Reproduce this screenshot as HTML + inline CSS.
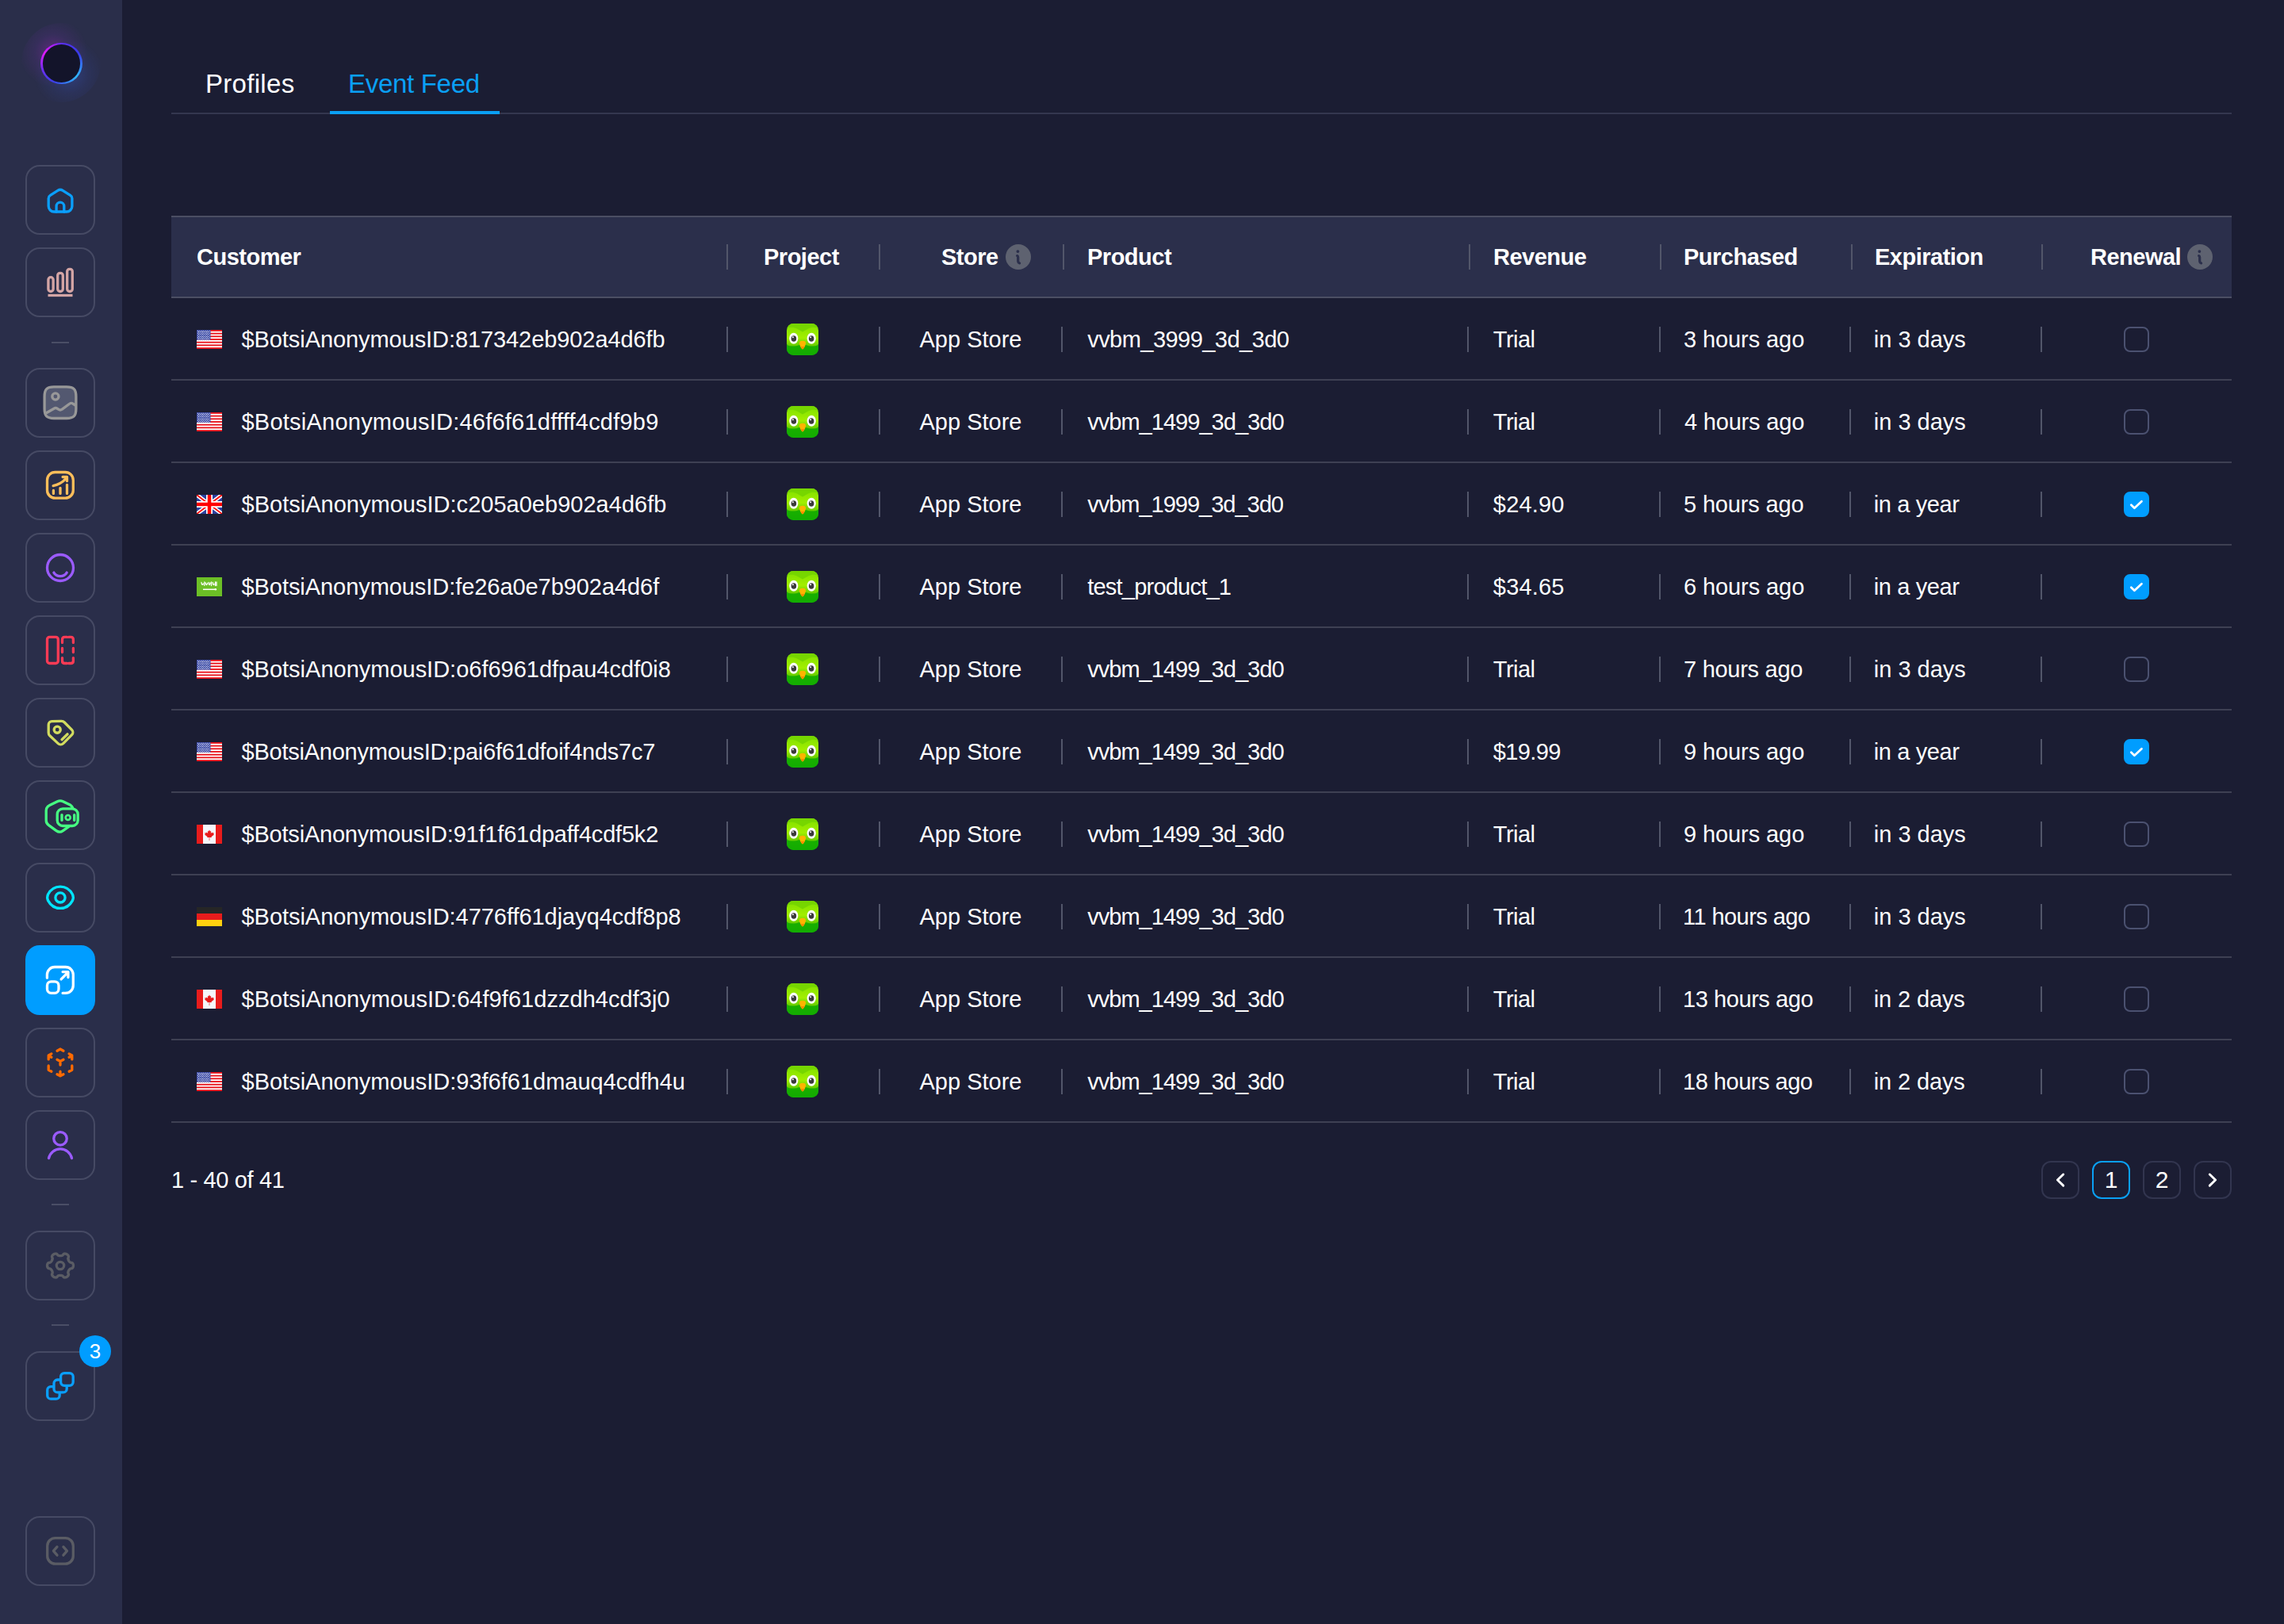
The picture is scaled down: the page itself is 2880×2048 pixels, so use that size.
<!DOCTYPE html>
<html><head><meta charset="utf-8"><style>
*{box-sizing:border-box;margin:0;padding:0}
html,body{width:2880px;height:2048px;overflow:hidden;background:#1b1d33;font-family:"Liberation Sans",sans-serif;color:#fff;-webkit-font-smoothing:antialiased}
.t,.h,.tab,.pg,.badge{opacity:0.999}
.abs{position:absolute}
#side{position:absolute;left:0;top:0;width:154px;height:2048px;background:#2a2e4a}
.sbtn{position:absolute;left:32px;width:88px;height:88px;border:2px solid #464a64;border-radius:18px}
.sbtn svg{position:absolute;left:-2px;top:-2px}
.sbtn.act{background:#009dff;border-color:#009dff}
.dash{position:absolute;left:65px;width:22px;height:2px;background:#4a4e66}
.badge{position:absolute;left:100px;top:1684px;width:40px;height:40px;border-radius:50%;background:#009dff;color:#fff;font-size:26px;line-height:40px;text-align:center}
.tab{position:absolute;top:86px;font-size:33px;line-height:40px;white-space:nowrap}
.t{position:absolute;font-size:29px;line-height:32px;white-space:nowrap;color:#fff}
.h{position:absolute;font-size:29px;line-height:32px;white-space:nowrap;color:#fff;font-weight:700;letter-spacing:-0.5px}
.vs{position:absolute;width:2px;height:32px;background:#52566a}
.hl{position:absolute;left:216px;width:2598px;height:2px;background:#3e4053}
.info{position:absolute;width:32px;height:32px;border-radius:50%;background:#5e6270}
.cb{position:absolute;width:32px;height:32px;border:2px solid #4b5170;border-radius:8px}
.cb.on{background:#009dff;border-color:#009dff}
.cb.on svg{position:absolute;left:-2px;top:-2px}
.pg{position:absolute;top:1464px;width:48px;height:48px;border:2px solid #32354f;border-radius:12px;font-size:30px;line-height:44px;text-align:center;color:#fff}
.pg.on{border-color:#0aa0f5}
.pg svg{position:absolute;left:-2px;top:-2px}
</style></head><body>
<div id="side">
<div class="abs" style="left:27px;top:29px;width:100px;height:100px;border-radius:50%;background:radial-gradient(circle at 40% 37%, rgba(205,40,235,0.30) 0%, rgba(150,50,220,0.12) 26%, rgba(60,70,200,0) 50%),radial-gradient(circle at 60% 64%, rgba(60,100,245,0.30) 0%, rgba(60,90,230,0.10) 28%, rgba(60,90,230,0) 50%)"></div>
<div class="abs" style="left:51px;top:53.5px;width:52.5px;height:52.5px;border-radius:50%;background:conic-gradient(from 0deg,#5a30f0 0deg,#3a3ae8 60deg,#2fb8ff 130deg,#3a40e8 200deg,#6a2ff0 250deg,#e01cff 300deg,#a020f8 340deg,#5a30f0 360deg)"></div>
<div class="abs" style="left:53.5px;top:56px;width:47.5px;height:47.5px;border-radius:50%;background:#13142a"></div>

<div class="sbtn" style="top:208px"><svg width="88" height="88" viewBox="0 0 88 88" fill="none" stroke="#0a9ffc" stroke-width="3.3" stroke-linecap="round" stroke-linejoin="round"><path d="M29.2 42.2C29.2 40.6 30 39.2 31.3 38.4L40.7 32.3C42.7 31 45.3 31 47.3 32.3L56.8 38.4C58.1 39.2 58.9 40.6 58.9 42.2V52C58.9 55.9 55.8 59 51.9 59H36.2C32.3 59 29.2 55.9 29.2 52Z"/><path d="M39.1 59V52A4.85 4.85 0 0 1 48.8 52V59"/></svg></div>
<div class="sbtn" style="top:312px"><svg width="88" height="88" viewBox="0 0 88 88" fill="none" stroke="#d4a5a5" stroke-width="3.3" stroke-linecap="round" stroke-linejoin="round"><rect x="28.9" y="37.7" width="6.2" height="17.8" rx="3"/><rect x="40.7" y="32.4" width="6.6" height="23.1" rx="3"/><rect x="52.7" y="27.3" width="6.6" height="28.2" rx="3"/><path d="M28.5 60.5H59.5" stroke-linecap="butt"/></svg></div>
<div class="sbtn" style="top:464px"><svg width="88" height="88" viewBox="0 0 88 88" fill="none" stroke="#989898" stroke-width="3.3" stroke-linecap="round" stroke-linejoin="round"><path fill="#535870" d="M24.1 36C24.1 27 27 23.8 36 23.8H52C61 23.8 63.9 27 63.9 36V51.5C63.9 60.5 61 63.5 52 63.5H36C27 63.5 24.1 60.5 24.1 51.5Z"/><circle cx="37.9" cy="36" r="4.1"/><path d="M26 57L36.5 51C37.5 50.4 38.8 50.4 39.8 51L42.5 52.6C43.6 53.2 45 53.1 46 52.3L56 45C57.2 44.2 58.6 44.2 59.8 45L63 47"/></svg></div>
<div class="sbtn" style="top:568px"><svg width="88" height="88" viewBox="0 0 88 88" fill="none" stroke="#fdbe5a" stroke-width="3.3" stroke-linecap="round" stroke-linejoin="round"><rect x="27.5" y="27.5" width="32.8" height="32.7" rx="10"/><path d="M35.4 54.4V50.4M44 54.4V47.3M52.5 54.4V43.3"/><path d="M35.1 44.6C41 43.5 46.5 40.5 51.1 35.6"/><path d="M47.1 33.5H52.5V38.7"/></svg></div>
<div class="sbtn" style="top:672px"><svg width="88" height="88" viewBox="0 0 88 88" fill="none" stroke="#9b5bff" stroke-width="3.3" stroke-linecap="round" stroke-linejoin="round"><circle cx="44" cy="44" r="16.5"/><path d="M35.9 50.1A9.5 9.5 0 0 0 52.2 50.1"/></svg></div>
<div class="sbtn" style="top:776px"><svg width="88" height="88" viewBox="0 0 88 88" fill="none" stroke="#ff3b55" stroke-width="3.3" stroke-linecap="round" stroke-linejoin="round"><rect x="27.5" y="27.4" width="13.8" height="33.1" rx="3"/><path d="M46.5 34.4V30.5Q46.5 27.4 49.6 27.4H52.4M54.6 27.4H57.3Q60.4 27.4 60.4 30.5V34.4M46.5 41.5V46.5M60.4 41.5V46.5M46.5 53.6V57.4Q46.5 60.5 49.6 60.5H52.4M54.6 60.5H57.3Q60.4 60.5 60.4 57.4V53.6"/></svg></div>
<div class="sbtn" style="top:880px"><svg width="88" height="88" viewBox="0 0 88 88" fill="none" stroke="#d2dc5f" stroke-width="3.3" stroke-linecap="round" stroke-linejoin="round"><path d="M29.2 34C29.2 31.5 31 29.6 33.5 29.6L45.5 29.4C47 29.4 48.3 30 49.3 31L58.6 40.3C60.3 42 60.3 45 58.6 46.7L47.7 57.6C46 59.3 43 59.3 41.3 57.6L30.8 47.8C29.8 46.8 29.2 45.5 29.2 44Z"/><circle cx="40.2" cy="40.2" r="4.05"/><path d="M46 52.7L53.1 45.8"/></svg></div>
<div class="sbtn" style="top:984px"><svg width="88" height="88" viewBox="0 0 88 88" fill="none" stroke="#46ff82" stroke-width="3.3" stroke-linecap="round" stroke-linejoin="round"><path d="M59.7 35C59.2 33.5 58.3 32.2 56.9 31.3L47.5 26.8C45.2 25.7 42.6 25.7 40.3 26.8L30.6 31.4C28 32.7 26.2 35.4 26.2 38.3V50.6C26.2 53 27.4 55.3 29.4 56.6L39 63.6C41.5 65.4 44.9 65.4 47.4 63.6L54.5 58.7"/><rect x="40.2" y="35.9" width="26" height="21.6" rx="7"/><path d="M46 43.6V50.4M61.7 43.6V50.4"/><circle cx="53.7" cy="47" r="3" stroke-width="2.6"/></svg></div>
<div class="sbtn" style="top:1088px"><svg width="88" height="88" viewBox="0 0 88 88" fill="none" stroke="#00e5ff" stroke-width="3.3" stroke-linecap="round" stroke-linejoin="round"><path d="M28.5 40C32 33.5 37.5 30.2 44 30.2C50.5 30.2 56 33.5 59.5 40Q61.2 43.8 59.5 47.6C56 54.1 50.5 57.4 44 57.4C37.5 57.4 32 54.1 28.5 47.6Q26.8 43.8 28.5 40Z"/><circle cx="44" cy="43.9" r="6.1"/></svg></div>
<div class="sbtn act" style="top:1192px"><svg width="88" height="88" viewBox="0 0 88 88" fill="none" stroke="#ffffff" stroke-width="3.3" stroke-linecap="round" stroke-linejoin="round"><path d="M27.4 41.2V37.1A9.6 9.6 0 0 1 37 27.5H50.7A9.6 9.6 0 0 1 60.3 37.1V50.8A9.6 9.6 0 0 1 50.7 60.4H47.1"/><rect x="27.5" y="45.8" width="14.5" height="14.5" rx="5"/><path d="M45.1 42.9L53.6 34.4M47.1 33.6H53.9V40.6"/></svg></div>
<div class="sbtn" style="top:1296px"><svg width="88" height="88" viewBox="0 0 88 88" fill="none" stroke="#ff6a00" stroke-width="3.3" stroke-linecap="round" stroke-linejoin="round"><path d="M40 29.2L44 27L48 29.2M32.9 32.9L29.2 35V39.9M29.2 35.3L32.9 37.2M55.1 32.9L58.8 35V39.9M58.8 35.3L55.1 37.2M40 40.2L44 42.4L48 40.2M44 42.4V47M29.2 47.9V53.2L32.9 55.3M58.8 47.9V53.2L55.1 55.3M44 55.2V60.9M40 58.7L44 60.9L48 58.7"/></svg></div>
<div class="sbtn" style="top:1400px"><svg width="88" height="88" viewBox="0 0 88 88" fill="none" stroke="#9b5bff" stroke-width="3.3" stroke-linecap="round" stroke-linejoin="round"><circle cx="44" cy="35.8" r="8.25"/><path d="M29.5 60.6A14.85 14.85 0 0 1 58.5 60.6"/></svg></div>
<div class="sbtn" style="top:1552px"><svg width="88" height="88" viewBox="0 0 88 88" fill="none" stroke="#5a5c64" stroke-width="3.3" stroke-linecap="round" stroke-linejoin="round"><path d="M60.50 44.00 L60.48 44.43 L60.43 44.86 L60.34 45.29 L60.22 45.70 L60.06 46.11 L59.86 46.51 L59.61 46.89 L59.30 47.25 L58.89 47.57 L57.91 47.73 L56.93 47.83 L56.52 48.07 L56.19 48.32 L55.90 48.57 L55.64 48.82 L55.41 49.08 L55.20 49.34 L55.00 49.61 L54.82 49.87 L54.65 50.15 L54.50 50.43 L54.35 50.72 L54.22 51.03 L54.11 51.34 L54.00 51.67 L53.91 52.02 L53.83 52.40 L53.78 52.81 L53.78 53.28 L54.18 54.18 L54.54 55.11 L54.46 55.62 L54.31 56.07 L54.10 56.48 L53.86 56.85 L53.59 57.19 L53.29 57.51 L52.96 57.80 L52.62 58.06 L52.25 58.29 L51.87 58.49 L51.47 58.66 L51.06 58.80 L50.63 58.90 L50.20 58.96 L49.75 58.99 L49.30 58.96 L48.83 58.87 L48.35 58.68 L47.73 57.91 L47.15 57.12 L46.74 56.87 L46.36 56.71 L45.99 56.59 L45.65 56.50 L45.31 56.42 L44.97 56.37 L44.65 56.33 L44.32 56.31 L44.00 56.30 L43.68 56.31 L43.35 56.33 L43.03 56.37 L42.69 56.42 L42.35 56.50 L42.01 56.59 L41.64 56.71 L41.26 56.87 L40.85 57.12 L40.27 57.91 L39.65 58.68 L39.17 58.87 L38.70 58.96 L38.25 58.99 L37.80 58.96 L37.37 58.90 L36.94 58.80 L36.53 58.66 L36.13 58.49 L35.75 58.29 L35.38 58.06 L35.04 57.80 L34.71 57.51 L34.41 57.19 L34.14 56.85 L33.90 56.48 L33.69 56.07 L33.54 55.62 L33.46 55.11 L33.82 54.18 L34.22 53.28 L34.22 52.81 L34.17 52.40 L34.09 52.02 L34.00 51.67 L33.89 51.34 L33.78 51.03 L33.65 50.72 L33.50 50.43 L33.35 50.15 L33.18 49.87 L33.00 49.61 L32.80 49.34 L32.59 49.08 L32.36 48.82 L32.10 48.57 L31.81 48.32 L31.48 48.07 L31.07 47.83 L30.09 47.73 L29.11 47.57 L28.70 47.25 L28.39 46.89 L28.14 46.51 L27.94 46.11 L27.78 45.70 L27.66 45.29 L27.57 44.86 L27.52 44.43 L27.50 44.00 L27.52 43.57 L27.57 43.14 L27.66 42.71 L27.78 42.30 L27.94 41.89 L28.14 41.49 L28.39 41.11 L28.70 40.75 L29.11 40.43 L30.09 40.27 L31.07 40.17 L31.48 39.93 L31.81 39.68 L32.10 39.43 L32.36 39.18 L32.59 38.92 L32.80 38.66 L33.00 38.39 L33.18 38.13 L33.35 37.85 L33.50 37.57 L33.65 37.28 L33.78 36.97 L33.89 36.66 L34.00 36.33 L34.09 35.98 L34.17 35.60 L34.22 35.19 L34.22 34.72 L33.82 33.82 L33.46 32.89 L33.54 32.38 L33.69 31.93 L33.90 31.52 L34.14 31.15 L34.41 30.81 L34.71 30.49 L35.04 30.20 L35.38 29.94 L35.75 29.71 L36.13 29.51 L36.53 29.34 L36.94 29.20 L37.37 29.10 L37.80 29.04 L38.25 29.01 L38.70 29.04 L39.17 29.13 L39.65 29.32 L40.27 30.09 L40.85 30.88 L41.26 31.13 L41.64 31.29 L42.01 31.41 L42.35 31.50 L42.69 31.58 L43.03 31.63 L43.35 31.67 L43.68 31.69 L44.00 31.70 L44.32 31.69 L44.65 31.67 L44.97 31.63 L45.31 31.58 L45.65 31.50 L45.99 31.41 L46.36 31.29 L46.74 31.13 L47.15 30.88 L47.73 30.09 L48.35 29.32 L48.83 29.13 L49.30 29.04 L49.75 29.01 L50.20 29.04 L50.63 29.10 L51.06 29.20 L51.47 29.34 L51.87 29.51 L52.25 29.71 L52.62 29.94 L52.96 30.20 L53.29 30.49 L53.59 30.81 L53.86 31.15 L54.10 31.52 L54.31 31.93 L54.46 32.38 L54.54 32.89 L54.18 33.82 L53.78 34.72 L53.78 35.19 L53.83 35.60 L53.91 35.98 L54.00 36.33 L54.11 36.66 L54.22 36.97 L54.35 37.28 L54.50 37.57 L54.65 37.85 L54.82 38.13 L55.00 38.39 L55.20 38.66 L55.41 38.92 L55.64 39.18 L55.90 39.43 L56.19 39.68 L56.52 39.93 L56.93 40.17 L57.91 40.27 L58.89 40.43 L59.30 40.75 L59.61 41.11 L59.86 41.49 L60.06 41.89 L60.22 42.30 L60.34 42.71 L60.43 43.14 L60.48 43.57Z"/><circle cx="44" cy="44" r="4.7"/></svg></div>
<div class="sbtn" style="top:1704px"><svg width="88" height="88" viewBox="0 0 88 88" fill="none" stroke="#0a9ffc" stroke-width="3.3" stroke-linecap="round" stroke-linejoin="round"><rect x="27.7" y="44.7" width="15.5" height="15.5" rx="4.5" fill="#2a2e4a"/><rect x="36" y="36" width="16.2" height="15.9" rx="4.5" fill="#2a2e4a"/><rect x="44.6" y="27.6" width="15.6" height="15.7" rx="4.5" fill="#2a2e4a"/></svg></div>
<div class="sbtn" style="top:1912px"><svg width="88" height="88" viewBox="0 0 88 88" fill="none" stroke="#5a5c64" stroke-width="3.3" stroke-linecap="round" stroke-linejoin="round"><rect x="27.7" y="27.6" width="32.6" height="32.6" rx="10"/><path d="M40 38.7L35.4 43.9L40 49.2M47.9 38.7L52.5 43.9L47.9 49.2"/></svg></div>
<div class="dash" style="top:431px"></div>
<div class="dash" style="top:1518px"></div>
<div class="dash" style="top:1670px"></div>
<div class="badge">3</div>
</div>
<div class="tab" style="left:259px;letter-spacing:0.3px">Profiles</div>
<div class="tab" style="left:439px;color:#0aa0f5;letter-spacing:-0.3px">Event Feed</div>
<div class="abs" style="left:216px;top:142px;width:2598px;height:2px;background:#34374f"></div>
<div class="abs" style="left:416px;top:140px;width:214px;height:4px;background:#0aa0f5"></div>
<div class="abs" style="left:216px;top:272px;width:2598px;height:104px;background:#2b2f4b"></div>
<div class="hl" style="top:272px;background:#4b4e63"></div>
<div class="hl" style="top:374px;background:#4b4e63"></div>
<div class="h" style="left:248px;top:308px">Customer</div>
<div class="h" style="left:963px;top:308px">Project</div>
<div class="h" style="left:1187px;top:308px">Store</div>
<div class="info" style="left:1268px;top:308px"><svg width="32" height="32" viewBox="0 0 32 32" fill="none" stroke="#2b2f4b" stroke-width="3.2" stroke-linecap="round"><circle cx="15.4" cy="9.1" r="1.9" fill="#2b2f4b" stroke="none"/><path d="M14.6 14.6Q15.7 15 15.7 16.6V21.6Q15.8 23 17.6 23.9"/></svg></div>
<div class="h" style="left:1371px;top:308px">Product</div>
<div class="h" style="left:1883px;top:308px">Revenue</div>
<div class="h" style="left:2123px;top:308px">Purchased</div>
<div class="h" style="left:2364px;top:308px">Expiration</div>
<div class="h" style="left:2636px;top:308px">Renewal</div>
<div class="info" style="left:2758px;top:308px"><svg width="32" height="32" viewBox="0 0 32 32" fill="none" stroke="#2b2f4b" stroke-width="3.2" stroke-linecap="round"><circle cx="15.4" cy="9.1" r="1.9" fill="#2b2f4b" stroke="none"/><path d="M14.6 14.6Q15.7 15 15.7 16.6V21.6Q15.8 23 17.6 23.9"/></svg></div>
<div class="vs" style="left:916px;top:308px"></div>
<div class="vs" style="left:1108px;top:308px"></div>
<div class="vs" style="left:1340px;top:308px"></div>
<div class="vs" style="left:1852px;top:308px"></div>
<div class="vs" style="left:2092.5px;top:308px"></div>
<div class="vs" style="left:2333.5px;top:308px"></div>
<div class="vs" style="left:2573.5px;top:308px"></div>
<div class="abs" style="left:248px;top:416px;width:32px;height:24px"><svg width="32" height="24" viewBox="0 0 32 24"><rect width="32" height="24" fill="#fff"/><rect y="0.000" width="32" height="1.846" fill="#e8141c"/><rect y="3.692" width="32" height="1.846" fill="#e8141c"/><rect y="7.385" width="32" height="1.846" fill="#e8141c"/><rect y="11.077" width="32" height="1.846" fill="#e8141c"/><rect y="14.769" width="32" height="1.846" fill="#e8141c"/><rect y="18.462" width="32" height="1.846" fill="#e8141c"/><rect y="22.154" width="32" height="1.846" fill="#e8141c"/><rect width="17.5" height="12.9" fill="#3b4aa6"/><circle cx="1.40" cy="1.20" r="0.55" fill="#fff"/><circle cx="3.85" cy="1.20" r="0.55" fill="#fff"/><circle cx="6.30" cy="1.20" r="0.55" fill="#fff"/><circle cx="8.75" cy="1.20" r="0.55" fill="#fff"/><circle cx="11.20" cy="1.20" r="0.55" fill="#fff"/><circle cx="13.65" cy="1.20" r="0.55" fill="#fff"/><circle cx="16.10" cy="1.20" r="0.55" fill="#fff"/><circle cx="2.62" cy="2.65" r="0.55" fill="#fff"/><circle cx="5.07" cy="2.65" r="0.55" fill="#fff"/><circle cx="7.52" cy="2.65" r="0.55" fill="#fff"/><circle cx="9.97" cy="2.65" r="0.55" fill="#fff"/><circle cx="12.42" cy="2.65" r="0.55" fill="#fff"/><circle cx="14.87" cy="2.65" r="0.55" fill="#fff"/><circle cx="1.40" cy="4.10" r="0.55" fill="#fff"/><circle cx="3.85" cy="4.10" r="0.55" fill="#fff"/><circle cx="6.30" cy="4.10" r="0.55" fill="#fff"/><circle cx="8.75" cy="4.10" r="0.55" fill="#fff"/><circle cx="11.20" cy="4.10" r="0.55" fill="#fff"/><circle cx="13.65" cy="4.10" r="0.55" fill="#fff"/><circle cx="16.10" cy="4.10" r="0.55" fill="#fff"/><circle cx="2.62" cy="5.55" r="0.55" fill="#fff"/><circle cx="5.07" cy="5.55" r="0.55" fill="#fff"/><circle cx="7.52" cy="5.55" r="0.55" fill="#fff"/><circle cx="9.97" cy="5.55" r="0.55" fill="#fff"/><circle cx="12.42" cy="5.55" r="0.55" fill="#fff"/><circle cx="14.87" cy="5.55" r="0.55" fill="#fff"/><circle cx="1.40" cy="7.00" r="0.55" fill="#fff"/><circle cx="3.85" cy="7.00" r="0.55" fill="#fff"/><circle cx="6.30" cy="7.00" r="0.55" fill="#fff"/><circle cx="8.75" cy="7.00" r="0.55" fill="#fff"/><circle cx="11.20" cy="7.00" r="0.55" fill="#fff"/><circle cx="13.65" cy="7.00" r="0.55" fill="#fff"/><circle cx="16.10" cy="7.00" r="0.55" fill="#fff"/><circle cx="2.62" cy="8.45" r="0.55" fill="#fff"/><circle cx="5.07" cy="8.45" r="0.55" fill="#fff"/><circle cx="7.52" cy="8.45" r="0.55" fill="#fff"/><circle cx="9.97" cy="8.45" r="0.55" fill="#fff"/><circle cx="12.42" cy="8.45" r="0.55" fill="#fff"/><circle cx="14.87" cy="8.45" r="0.55" fill="#fff"/><circle cx="1.40" cy="9.90" r="0.55" fill="#fff"/><circle cx="3.85" cy="9.90" r="0.55" fill="#fff"/><circle cx="6.30" cy="9.90" r="0.55" fill="#fff"/><circle cx="8.75" cy="9.90" r="0.55" fill="#fff"/><circle cx="11.20" cy="9.90" r="0.55" fill="#fff"/><circle cx="13.65" cy="9.90" r="0.55" fill="#fff"/><circle cx="16.10" cy="9.90" r="0.55" fill="#fff"/><circle cx="2.62" cy="11.35" r="0.55" fill="#fff"/><circle cx="5.07" cy="11.35" r="0.55" fill="#fff"/><circle cx="7.52" cy="11.35" r="0.55" fill="#fff"/><circle cx="9.97" cy="11.35" r="0.55" fill="#fff"/><circle cx="12.42" cy="11.35" r="0.55" fill="#fff"/><circle cx="14.87" cy="11.35" r="0.55" fill="#fff"/><circle cx="1.40" cy="12.80" r="0.55" fill="#fff"/><circle cx="3.85" cy="12.80" r="0.55" fill="#fff"/><circle cx="6.30" cy="12.80" r="0.55" fill="#fff"/><circle cx="8.75" cy="12.80" r="0.55" fill="#fff"/><circle cx="11.20" cy="12.80" r="0.55" fill="#fff"/><circle cx="13.65" cy="12.80" r="0.55" fill="#fff"/><circle cx="16.10" cy="12.80" r="0.55" fill="#fff"/></svg></div>
<div class="t" style="left:304.5px;top:412.4px;letter-spacing:-0.079px">$BotsiAnonymousID:817342eb902a4d6fb</div>
<div class="abs" style="left:992px;top:408px;width:40px;height:40px"><svg width="40" height="40" viewBox="0 0 40 40"><defs><linearGradient id="og" x1="0" y1="0" x2="0" y2="1"><stop offset="0" stop-color="#7fe000"/><stop offset="0.45" stop-color="#a2ee00"/><stop offset="0.7" stop-color="#66cc00"/><stop offset="0.72" stop-color="#22b000"/><stop offset="1" stop-color="#00a300"/></linearGradient></defs><clipPath id="oc"><rect width="40" height="40" rx="8.5"/></clipPath><g clip-path="url(#oc)"><rect width="40" height="40" fill="url(#og)"/><path d="M0 6C5 4 9 4.5 13 6.5L20 10.5L27 6.5C31 4.5 35 4 40 6V0H0Z" fill="#74d400" opacity="0.9"/><path d="M0 26C4 30 10 30 14 27.5L20 26L26 27.5C30 30 36 30 40 26V40H0Z" fill="#16ae00" opacity="0.85"/></g><ellipse cx="8.8" cy="18.7" rx="5.6" ry="7" fill="#fff"/><ellipse cx="31.2" cy="18.7" rx="5.6" ry="7" fill="#fff"/><ellipse cx="8.9" cy="19" rx="3.3" ry="3.8" fill="#3a3a3a"/><ellipse cx="31.1" cy="19" rx="3.3" ry="3.8" fill="#3a3a3a"/><circle cx="7.9" cy="17.3" r="1" fill="#fff"/><circle cx="30.1" cy="17.3" r="1" fill="#fff"/><path d="M16 24.5C16 22.5 18 21.8 20 21.8C22 21.8 24 22.5 24 24.5C24 27 22 31.5 20 32.5C18 31.5 16 27 16 24.5Z" fill="#ffb400"/><path d="M17.5 29C18.5 31 19.2 32 20 32.5C20.8 32 21.5 31 22.5 29Z" fill="#ff8a00"/></svg></div>
<div class="t" style="left:1109px;width:230px;text-align:center;top:412.4px">App Store</div>
<div class="t" style="left:1371.2px;top:412.4px;letter-spacing:-0.54px">vvbm_3999_3d_3d0</div>
<div class="t" style="left:1882.8px;top:412.4px;letter-spacing:-0.525px">Trial</div>
<div class="t" style="left:2123.0px;top:412.4px;letter-spacing:-0.09px">3 hours ago</div>
<div class="t" style="left:2362.8px;top:412.4px;letter-spacing:0.0px">in 3 days</div>
<div class="abs" style="left:2677.5px;top:412px;width:32px;height:32px"><div class="cb"></div></div>
<div class="vs" style="left:916px;top:412px"></div>
<div class="vs" style="left:1108px;top:412px"></div>
<div class="vs" style="left:1338px;top:412px"></div>
<div class="vs" style="left:1850px;top:412px"></div>
<div class="vs" style="left:2091.5px;top:412px"></div>
<div class="vs" style="left:2332px;top:412px"></div>
<div class="vs" style="left:2573px;top:412px"></div>
<div class="hl" style="top:478px"></div>
<div class="abs" style="left:248px;top:520px;width:32px;height:24px"><svg width="32" height="24" viewBox="0 0 32 24"><rect width="32" height="24" fill="#fff"/><rect y="0.000" width="32" height="1.846" fill="#e8141c"/><rect y="3.692" width="32" height="1.846" fill="#e8141c"/><rect y="7.385" width="32" height="1.846" fill="#e8141c"/><rect y="11.077" width="32" height="1.846" fill="#e8141c"/><rect y="14.769" width="32" height="1.846" fill="#e8141c"/><rect y="18.462" width="32" height="1.846" fill="#e8141c"/><rect y="22.154" width="32" height="1.846" fill="#e8141c"/><rect width="17.5" height="12.9" fill="#3b4aa6"/><circle cx="1.40" cy="1.20" r="0.55" fill="#fff"/><circle cx="3.85" cy="1.20" r="0.55" fill="#fff"/><circle cx="6.30" cy="1.20" r="0.55" fill="#fff"/><circle cx="8.75" cy="1.20" r="0.55" fill="#fff"/><circle cx="11.20" cy="1.20" r="0.55" fill="#fff"/><circle cx="13.65" cy="1.20" r="0.55" fill="#fff"/><circle cx="16.10" cy="1.20" r="0.55" fill="#fff"/><circle cx="2.62" cy="2.65" r="0.55" fill="#fff"/><circle cx="5.07" cy="2.65" r="0.55" fill="#fff"/><circle cx="7.52" cy="2.65" r="0.55" fill="#fff"/><circle cx="9.97" cy="2.65" r="0.55" fill="#fff"/><circle cx="12.42" cy="2.65" r="0.55" fill="#fff"/><circle cx="14.87" cy="2.65" r="0.55" fill="#fff"/><circle cx="1.40" cy="4.10" r="0.55" fill="#fff"/><circle cx="3.85" cy="4.10" r="0.55" fill="#fff"/><circle cx="6.30" cy="4.10" r="0.55" fill="#fff"/><circle cx="8.75" cy="4.10" r="0.55" fill="#fff"/><circle cx="11.20" cy="4.10" r="0.55" fill="#fff"/><circle cx="13.65" cy="4.10" r="0.55" fill="#fff"/><circle cx="16.10" cy="4.10" r="0.55" fill="#fff"/><circle cx="2.62" cy="5.55" r="0.55" fill="#fff"/><circle cx="5.07" cy="5.55" r="0.55" fill="#fff"/><circle cx="7.52" cy="5.55" r="0.55" fill="#fff"/><circle cx="9.97" cy="5.55" r="0.55" fill="#fff"/><circle cx="12.42" cy="5.55" r="0.55" fill="#fff"/><circle cx="14.87" cy="5.55" r="0.55" fill="#fff"/><circle cx="1.40" cy="7.00" r="0.55" fill="#fff"/><circle cx="3.85" cy="7.00" r="0.55" fill="#fff"/><circle cx="6.30" cy="7.00" r="0.55" fill="#fff"/><circle cx="8.75" cy="7.00" r="0.55" fill="#fff"/><circle cx="11.20" cy="7.00" r="0.55" fill="#fff"/><circle cx="13.65" cy="7.00" r="0.55" fill="#fff"/><circle cx="16.10" cy="7.00" r="0.55" fill="#fff"/><circle cx="2.62" cy="8.45" r="0.55" fill="#fff"/><circle cx="5.07" cy="8.45" r="0.55" fill="#fff"/><circle cx="7.52" cy="8.45" r="0.55" fill="#fff"/><circle cx="9.97" cy="8.45" r="0.55" fill="#fff"/><circle cx="12.42" cy="8.45" r="0.55" fill="#fff"/><circle cx="14.87" cy="8.45" r="0.55" fill="#fff"/><circle cx="1.40" cy="9.90" r="0.55" fill="#fff"/><circle cx="3.85" cy="9.90" r="0.55" fill="#fff"/><circle cx="6.30" cy="9.90" r="0.55" fill="#fff"/><circle cx="8.75" cy="9.90" r="0.55" fill="#fff"/><circle cx="11.20" cy="9.90" r="0.55" fill="#fff"/><circle cx="13.65" cy="9.90" r="0.55" fill="#fff"/><circle cx="16.10" cy="9.90" r="0.55" fill="#fff"/><circle cx="2.62" cy="11.35" r="0.55" fill="#fff"/><circle cx="5.07" cy="11.35" r="0.55" fill="#fff"/><circle cx="7.52" cy="11.35" r="0.55" fill="#fff"/><circle cx="9.97" cy="11.35" r="0.55" fill="#fff"/><circle cx="12.42" cy="11.35" r="0.55" fill="#fff"/><circle cx="14.87" cy="11.35" r="0.55" fill="#fff"/><circle cx="1.40" cy="12.80" r="0.55" fill="#fff"/><circle cx="3.85" cy="12.80" r="0.55" fill="#fff"/><circle cx="6.30" cy="12.80" r="0.55" fill="#fff"/><circle cx="8.75" cy="12.80" r="0.55" fill="#fff"/><circle cx="11.20" cy="12.80" r="0.55" fill="#fff"/><circle cx="13.65" cy="12.80" r="0.55" fill="#fff"/><circle cx="16.10" cy="12.80" r="0.55" fill="#fff"/></svg></div>
<div class="t" style="left:304.5px;top:516.4px;letter-spacing:0.231px">$BotsiAnonymousID:46f6f61dffff4cdf9b9</div>
<div class="abs" style="left:992px;top:512px;width:40px;height:40px"><svg width="40" height="40" viewBox="0 0 40 40"><defs><linearGradient id="og" x1="0" y1="0" x2="0" y2="1"><stop offset="0" stop-color="#7fe000"/><stop offset="0.45" stop-color="#a2ee00"/><stop offset="0.7" stop-color="#66cc00"/><stop offset="0.72" stop-color="#22b000"/><stop offset="1" stop-color="#00a300"/></linearGradient></defs><clipPath id="oc"><rect width="40" height="40" rx="8.5"/></clipPath><g clip-path="url(#oc)"><rect width="40" height="40" fill="url(#og)"/><path d="M0 6C5 4 9 4.5 13 6.5L20 10.5L27 6.5C31 4.5 35 4 40 6V0H0Z" fill="#74d400" opacity="0.9"/><path d="M0 26C4 30 10 30 14 27.5L20 26L26 27.5C30 30 36 30 40 26V40H0Z" fill="#16ae00" opacity="0.85"/></g><ellipse cx="8.8" cy="18.7" rx="5.6" ry="7" fill="#fff"/><ellipse cx="31.2" cy="18.7" rx="5.6" ry="7" fill="#fff"/><ellipse cx="8.9" cy="19" rx="3.3" ry="3.8" fill="#3a3a3a"/><ellipse cx="31.1" cy="19" rx="3.3" ry="3.8" fill="#3a3a3a"/><circle cx="7.9" cy="17.3" r="1" fill="#fff"/><circle cx="30.1" cy="17.3" r="1" fill="#fff"/><path d="M16 24.5C16 22.5 18 21.8 20 21.8C22 21.8 24 22.5 24 24.5C24 27 22 31.5 20 32.5C18 31.5 16 27 16 24.5Z" fill="#ffb400"/><path d="M17.5 29C18.5 31 19.2 32 20 32.5C20.8 32 21.5 31 22.5 29Z" fill="#ff8a00"/></svg></div>
<div class="t" style="left:1109px;width:230px;text-align:center;top:516.4px">App Store</div>
<div class="t" style="left:1371.2px;top:516.4px;letter-spacing:-0.967px">vvbm_1499_3d_3d0</div>
<div class="t" style="left:1882.8px;top:516.4px;letter-spacing:-0.525px">Trial</div>
<div class="t" style="left:2124.0px;top:516.4px;letter-spacing:-0.19px">4 hours ago</div>
<div class="t" style="left:2362.8px;top:516.4px;letter-spacing:0.0px">in 3 days</div>
<div class="abs" style="left:2677.5px;top:516px;width:32px;height:32px"><div class="cb"></div></div>
<div class="vs" style="left:916px;top:516px"></div>
<div class="vs" style="left:1108px;top:516px"></div>
<div class="vs" style="left:1338px;top:516px"></div>
<div class="vs" style="left:1850px;top:516px"></div>
<div class="vs" style="left:2091.5px;top:516px"></div>
<div class="vs" style="left:2332px;top:516px"></div>
<div class="vs" style="left:2573px;top:516px"></div>
<div class="hl" style="top:582px"></div>
<div class="abs" style="left:248px;top:624px;width:32px;height:24px"><svg width="32" height="24" viewBox="0 0 32 24"><rect width="32" height="24" fill="#2b3f9e"/><path d="M0 0L32 24M32 0L0 24" stroke="#fff" stroke-width="5"/><path d="M0 0L32 24M32 0L0 24" stroke="#f00" stroke-width="1.8"/><path d="M16 0V24M0 12H32" stroke="#fff" stroke-width="8"/><path d="M16 0V24M0 12H32" stroke="#f00" stroke-width="4.5"/></svg></div>
<div class="t" style="left:304.5px;top:620.4px;letter-spacing:0.018px">$BotsiAnonymousID:c205a0eb902a4d6fb</div>
<div class="abs" style="left:992px;top:616px;width:40px;height:40px"><svg width="40" height="40" viewBox="0 0 40 40"><defs><linearGradient id="og" x1="0" y1="0" x2="0" y2="1"><stop offset="0" stop-color="#7fe000"/><stop offset="0.45" stop-color="#a2ee00"/><stop offset="0.7" stop-color="#66cc00"/><stop offset="0.72" stop-color="#22b000"/><stop offset="1" stop-color="#00a300"/></linearGradient></defs><clipPath id="oc"><rect width="40" height="40" rx="8.5"/></clipPath><g clip-path="url(#oc)"><rect width="40" height="40" fill="url(#og)"/><path d="M0 6C5 4 9 4.5 13 6.5L20 10.5L27 6.5C31 4.5 35 4 40 6V0H0Z" fill="#74d400" opacity="0.9"/><path d="M0 26C4 30 10 30 14 27.5L20 26L26 27.5C30 30 36 30 40 26V40H0Z" fill="#16ae00" opacity="0.85"/></g><ellipse cx="8.8" cy="18.7" rx="5.6" ry="7" fill="#fff"/><ellipse cx="31.2" cy="18.7" rx="5.6" ry="7" fill="#fff"/><ellipse cx="8.9" cy="19" rx="3.3" ry="3.8" fill="#3a3a3a"/><ellipse cx="31.1" cy="19" rx="3.3" ry="3.8" fill="#3a3a3a"/><circle cx="7.9" cy="17.3" r="1" fill="#fff"/><circle cx="30.1" cy="17.3" r="1" fill="#fff"/><path d="M16 24.5C16 22.5 18 21.8 20 21.8C22 21.8 24 22.5 24 24.5C24 27 22 31.5 20 32.5C18 31.5 16 27 16 24.5Z" fill="#ffb400"/><path d="M17.5 29C18.5 31 19.2 32 20 32.5C20.8 32 21.5 31 22.5 29Z" fill="#ff8a00"/></svg></div>
<div class="t" style="left:1109px;width:230px;text-align:center;top:620.4px">App Store</div>
<div class="t" style="left:1371.2px;top:620.4px;letter-spacing:-1.007px">vvbm_1999_3d_3d0</div>
<div class="t" style="left:1882.8px;top:620.4px;letter-spacing:0.2px">$24.90</div>
<div class="t" style="left:2123.0px;top:620.4px;letter-spacing:-0.15px">5 hours ago</div>
<div class="t" style="left:2362.8px;top:620.4px;letter-spacing:-0.375px">in a year</div>
<div class="abs" style="left:2677.5px;top:620px;width:32px;height:32px"><div class="cb on"><svg width="32" height="32" viewBox="0 0 32 32" fill="none" stroke="#fff" stroke-width="2.7" stroke-linecap="round" stroke-linejoin="round"><path d="M9.3 16.7L13.4 20.8L22.5 12.2"/></svg></div></div>
<div class="vs" style="left:916px;top:620px"></div>
<div class="vs" style="left:1108px;top:620px"></div>
<div class="vs" style="left:1338px;top:620px"></div>
<div class="vs" style="left:1850px;top:620px"></div>
<div class="vs" style="left:2091.5px;top:620px"></div>
<div class="vs" style="left:2332px;top:620px"></div>
<div class="vs" style="left:2573px;top:620px"></div>
<div class="hl" style="top:686px"></div>
<div class="abs" style="left:248px;top:728px;width:32px;height:24px"><svg width="32" height="24" viewBox="0 0 32 24"><rect width="32" height="24" fill="#6cbf26"/><path d="M6 6.5C6.3 9.5 7.5 10.5 8.3 8M9.8 6V10.3M11.3 7C11.5 10 13 10.5 13.5 7.5M15 6.5C15.3 10.5 16.8 10.5 17 7M18.5 6V10.5M20.3 6.5C20.5 9.5 21.5 10.5 22 8.5M23.5 6V10.5M25 6V10.5" stroke="#fff" stroke-width="1.3" fill="none" stroke-linecap="round"/><path d="M8 15.3H23.5" stroke="#fff" stroke-width="1.5"/><circle cx="23.8" cy="15.3" r="1.3" fill="#fff"/></svg></div>
<div class="t" style="left:304.5px;top:724.4px;letter-spacing:-0.062px">$BotsiAnonymousID:fe26a0e7b902a4d6f</div>
<div class="abs" style="left:992px;top:720px;width:40px;height:40px"><svg width="40" height="40" viewBox="0 0 40 40"><defs><linearGradient id="og" x1="0" y1="0" x2="0" y2="1"><stop offset="0" stop-color="#7fe000"/><stop offset="0.45" stop-color="#a2ee00"/><stop offset="0.7" stop-color="#66cc00"/><stop offset="0.72" stop-color="#22b000"/><stop offset="1" stop-color="#00a300"/></linearGradient></defs><clipPath id="oc"><rect width="40" height="40" rx="8.5"/></clipPath><g clip-path="url(#oc)"><rect width="40" height="40" fill="url(#og)"/><path d="M0 6C5 4 9 4.5 13 6.5L20 10.5L27 6.5C31 4.5 35 4 40 6V0H0Z" fill="#74d400" opacity="0.9"/><path d="M0 26C4 30 10 30 14 27.5L20 26L26 27.5C30 30 36 30 40 26V40H0Z" fill="#16ae00" opacity="0.85"/></g><ellipse cx="8.8" cy="18.7" rx="5.6" ry="7" fill="#fff"/><ellipse cx="31.2" cy="18.7" rx="5.6" ry="7" fill="#fff"/><ellipse cx="8.9" cy="19" rx="3.3" ry="3.8" fill="#3a3a3a"/><ellipse cx="31.1" cy="19" rx="3.3" ry="3.8" fill="#3a3a3a"/><circle cx="7.9" cy="17.3" r="1" fill="#fff"/><circle cx="30.1" cy="17.3" r="1" fill="#fff"/><path d="M16 24.5C16 22.5 18 21.8 20 21.8C22 21.8 24 22.5 24 24.5C24 27 22 31.5 20 32.5C18 31.5 16 27 16 24.5Z" fill="#ffb400"/><path d="M17.5 29C18.5 31 19.2 32 20 32.5C20.8 32 21.5 31 22.5 29Z" fill="#ff8a00"/></svg></div>
<div class="t" style="left:1109px;width:230px;text-align:center;top:724.4px">App Store</div>
<div class="t" style="left:1371.2px;top:724.4px;letter-spacing:-0.777px">test_product_1</div>
<div class="t" style="left:1882.8px;top:724.4px;letter-spacing:0.2px">$34.65</div>
<div class="t" style="left:2123.0px;top:724.4px;letter-spacing:-0.09px">6 hours ago</div>
<div class="t" style="left:2362.8px;top:724.4px;letter-spacing:-0.375px">in a year</div>
<div class="abs" style="left:2677.5px;top:724px;width:32px;height:32px"><div class="cb on"><svg width="32" height="32" viewBox="0 0 32 32" fill="none" stroke="#fff" stroke-width="2.7" stroke-linecap="round" stroke-linejoin="round"><path d="M9.3 16.7L13.4 20.8L22.5 12.2"/></svg></div></div>
<div class="vs" style="left:916px;top:724px"></div>
<div class="vs" style="left:1108px;top:724px"></div>
<div class="vs" style="left:1338px;top:724px"></div>
<div class="vs" style="left:1850px;top:724px"></div>
<div class="vs" style="left:2091.5px;top:724px"></div>
<div class="vs" style="left:2332px;top:724px"></div>
<div class="vs" style="left:2573px;top:724px"></div>
<div class="hl" style="top:790px"></div>
<div class="abs" style="left:248px;top:832px;width:32px;height:24px"><svg width="32" height="24" viewBox="0 0 32 24"><rect width="32" height="24" fill="#fff"/><rect y="0.000" width="32" height="1.846" fill="#e8141c"/><rect y="3.692" width="32" height="1.846" fill="#e8141c"/><rect y="7.385" width="32" height="1.846" fill="#e8141c"/><rect y="11.077" width="32" height="1.846" fill="#e8141c"/><rect y="14.769" width="32" height="1.846" fill="#e8141c"/><rect y="18.462" width="32" height="1.846" fill="#e8141c"/><rect y="22.154" width="32" height="1.846" fill="#e8141c"/><rect width="17.5" height="12.9" fill="#3b4aa6"/><circle cx="1.40" cy="1.20" r="0.55" fill="#fff"/><circle cx="3.85" cy="1.20" r="0.55" fill="#fff"/><circle cx="6.30" cy="1.20" r="0.55" fill="#fff"/><circle cx="8.75" cy="1.20" r="0.55" fill="#fff"/><circle cx="11.20" cy="1.20" r="0.55" fill="#fff"/><circle cx="13.65" cy="1.20" r="0.55" fill="#fff"/><circle cx="16.10" cy="1.20" r="0.55" fill="#fff"/><circle cx="2.62" cy="2.65" r="0.55" fill="#fff"/><circle cx="5.07" cy="2.65" r="0.55" fill="#fff"/><circle cx="7.52" cy="2.65" r="0.55" fill="#fff"/><circle cx="9.97" cy="2.65" r="0.55" fill="#fff"/><circle cx="12.42" cy="2.65" r="0.55" fill="#fff"/><circle cx="14.87" cy="2.65" r="0.55" fill="#fff"/><circle cx="1.40" cy="4.10" r="0.55" fill="#fff"/><circle cx="3.85" cy="4.10" r="0.55" fill="#fff"/><circle cx="6.30" cy="4.10" r="0.55" fill="#fff"/><circle cx="8.75" cy="4.10" r="0.55" fill="#fff"/><circle cx="11.20" cy="4.10" r="0.55" fill="#fff"/><circle cx="13.65" cy="4.10" r="0.55" fill="#fff"/><circle cx="16.10" cy="4.10" r="0.55" fill="#fff"/><circle cx="2.62" cy="5.55" r="0.55" fill="#fff"/><circle cx="5.07" cy="5.55" r="0.55" fill="#fff"/><circle cx="7.52" cy="5.55" r="0.55" fill="#fff"/><circle cx="9.97" cy="5.55" r="0.55" fill="#fff"/><circle cx="12.42" cy="5.55" r="0.55" fill="#fff"/><circle cx="14.87" cy="5.55" r="0.55" fill="#fff"/><circle cx="1.40" cy="7.00" r="0.55" fill="#fff"/><circle cx="3.85" cy="7.00" r="0.55" fill="#fff"/><circle cx="6.30" cy="7.00" r="0.55" fill="#fff"/><circle cx="8.75" cy="7.00" r="0.55" fill="#fff"/><circle cx="11.20" cy="7.00" r="0.55" fill="#fff"/><circle cx="13.65" cy="7.00" r="0.55" fill="#fff"/><circle cx="16.10" cy="7.00" r="0.55" fill="#fff"/><circle cx="2.62" cy="8.45" r="0.55" fill="#fff"/><circle cx="5.07" cy="8.45" r="0.55" fill="#fff"/><circle cx="7.52" cy="8.45" r="0.55" fill="#fff"/><circle cx="9.97" cy="8.45" r="0.55" fill="#fff"/><circle cx="12.42" cy="8.45" r="0.55" fill="#fff"/><circle cx="14.87" cy="8.45" r="0.55" fill="#fff"/><circle cx="1.40" cy="9.90" r="0.55" fill="#fff"/><circle cx="3.85" cy="9.90" r="0.55" fill="#fff"/><circle cx="6.30" cy="9.90" r="0.55" fill="#fff"/><circle cx="8.75" cy="9.90" r="0.55" fill="#fff"/><circle cx="11.20" cy="9.90" r="0.55" fill="#fff"/><circle cx="13.65" cy="9.90" r="0.55" fill="#fff"/><circle cx="16.10" cy="9.90" r="0.55" fill="#fff"/><circle cx="2.62" cy="11.35" r="0.55" fill="#fff"/><circle cx="5.07" cy="11.35" r="0.55" fill="#fff"/><circle cx="7.52" cy="11.35" r="0.55" fill="#fff"/><circle cx="9.97" cy="11.35" r="0.55" fill="#fff"/><circle cx="12.42" cy="11.35" r="0.55" fill="#fff"/><circle cx="14.87" cy="11.35" r="0.55" fill="#fff"/><circle cx="1.40" cy="12.80" r="0.55" fill="#fff"/><circle cx="3.85" cy="12.80" r="0.55" fill="#fff"/><circle cx="6.30" cy="12.80" r="0.55" fill="#fff"/><circle cx="8.75" cy="12.80" r="0.55" fill="#fff"/><circle cx="11.20" cy="12.80" r="0.55" fill="#fff"/><circle cx="13.65" cy="12.80" r="0.55" fill="#fff"/><circle cx="16.10" cy="12.80" r="0.55" fill="#fff"/></svg></div>
<div class="t" style="left:304.5px;top:828.4px;letter-spacing:-0.008px">$BotsiAnonymousID:o6f6961dfpau4cdf0i8</div>
<div class="abs" style="left:992px;top:824px;width:40px;height:40px"><svg width="40" height="40" viewBox="0 0 40 40"><defs><linearGradient id="og" x1="0" y1="0" x2="0" y2="1"><stop offset="0" stop-color="#7fe000"/><stop offset="0.45" stop-color="#a2ee00"/><stop offset="0.7" stop-color="#66cc00"/><stop offset="0.72" stop-color="#22b000"/><stop offset="1" stop-color="#00a300"/></linearGradient></defs><clipPath id="oc"><rect width="40" height="40" rx="8.5"/></clipPath><g clip-path="url(#oc)"><rect width="40" height="40" fill="url(#og)"/><path d="M0 6C5 4 9 4.5 13 6.5L20 10.5L27 6.5C31 4.5 35 4 40 6V0H0Z" fill="#74d400" opacity="0.9"/><path d="M0 26C4 30 10 30 14 27.5L20 26L26 27.5C30 30 36 30 40 26V40H0Z" fill="#16ae00" opacity="0.85"/></g><ellipse cx="8.8" cy="18.7" rx="5.6" ry="7" fill="#fff"/><ellipse cx="31.2" cy="18.7" rx="5.6" ry="7" fill="#fff"/><ellipse cx="8.9" cy="19" rx="3.3" ry="3.8" fill="#3a3a3a"/><ellipse cx="31.1" cy="19" rx="3.3" ry="3.8" fill="#3a3a3a"/><circle cx="7.9" cy="17.3" r="1" fill="#fff"/><circle cx="30.1" cy="17.3" r="1" fill="#fff"/><path d="M16 24.5C16 22.5 18 21.8 20 21.8C22 21.8 24 22.5 24 24.5C24 27 22 31.5 20 32.5C18 31.5 16 27 16 24.5Z" fill="#ffb400"/><path d="M17.5 29C18.5 31 19.2 32 20 32.5C20.8 32 21.5 31 22.5 29Z" fill="#ff8a00"/></svg></div>
<div class="t" style="left:1109px;width:230px;text-align:center;top:828.4px">App Store</div>
<div class="t" style="left:1371.2px;top:828.4px;letter-spacing:-0.967px">vvbm_1499_3d_3d0</div>
<div class="t" style="left:1882.8px;top:828.4px;letter-spacing:-0.525px">Trial</div>
<div class="t" style="left:2123.0px;top:828.4px;letter-spacing:-0.28px">7 hours ago</div>
<div class="t" style="left:2362.8px;top:828.4px;letter-spacing:0.0px">in 3 days</div>
<div class="abs" style="left:2677.5px;top:828px;width:32px;height:32px"><div class="cb"></div></div>
<div class="vs" style="left:916px;top:828px"></div>
<div class="vs" style="left:1108px;top:828px"></div>
<div class="vs" style="left:1338px;top:828px"></div>
<div class="vs" style="left:1850px;top:828px"></div>
<div class="vs" style="left:2091.5px;top:828px"></div>
<div class="vs" style="left:2332px;top:828px"></div>
<div class="vs" style="left:2573px;top:828px"></div>
<div class="hl" style="top:894px"></div>
<div class="abs" style="left:248px;top:936px;width:32px;height:24px"><svg width="32" height="24" viewBox="0 0 32 24"><rect width="32" height="24" fill="#fff"/><rect y="0.000" width="32" height="1.846" fill="#e8141c"/><rect y="3.692" width="32" height="1.846" fill="#e8141c"/><rect y="7.385" width="32" height="1.846" fill="#e8141c"/><rect y="11.077" width="32" height="1.846" fill="#e8141c"/><rect y="14.769" width="32" height="1.846" fill="#e8141c"/><rect y="18.462" width="32" height="1.846" fill="#e8141c"/><rect y="22.154" width="32" height="1.846" fill="#e8141c"/><rect width="17.5" height="12.9" fill="#3b4aa6"/><circle cx="1.40" cy="1.20" r="0.55" fill="#fff"/><circle cx="3.85" cy="1.20" r="0.55" fill="#fff"/><circle cx="6.30" cy="1.20" r="0.55" fill="#fff"/><circle cx="8.75" cy="1.20" r="0.55" fill="#fff"/><circle cx="11.20" cy="1.20" r="0.55" fill="#fff"/><circle cx="13.65" cy="1.20" r="0.55" fill="#fff"/><circle cx="16.10" cy="1.20" r="0.55" fill="#fff"/><circle cx="2.62" cy="2.65" r="0.55" fill="#fff"/><circle cx="5.07" cy="2.65" r="0.55" fill="#fff"/><circle cx="7.52" cy="2.65" r="0.55" fill="#fff"/><circle cx="9.97" cy="2.65" r="0.55" fill="#fff"/><circle cx="12.42" cy="2.65" r="0.55" fill="#fff"/><circle cx="14.87" cy="2.65" r="0.55" fill="#fff"/><circle cx="1.40" cy="4.10" r="0.55" fill="#fff"/><circle cx="3.85" cy="4.10" r="0.55" fill="#fff"/><circle cx="6.30" cy="4.10" r="0.55" fill="#fff"/><circle cx="8.75" cy="4.10" r="0.55" fill="#fff"/><circle cx="11.20" cy="4.10" r="0.55" fill="#fff"/><circle cx="13.65" cy="4.10" r="0.55" fill="#fff"/><circle cx="16.10" cy="4.10" r="0.55" fill="#fff"/><circle cx="2.62" cy="5.55" r="0.55" fill="#fff"/><circle cx="5.07" cy="5.55" r="0.55" fill="#fff"/><circle cx="7.52" cy="5.55" r="0.55" fill="#fff"/><circle cx="9.97" cy="5.55" r="0.55" fill="#fff"/><circle cx="12.42" cy="5.55" r="0.55" fill="#fff"/><circle cx="14.87" cy="5.55" r="0.55" fill="#fff"/><circle cx="1.40" cy="7.00" r="0.55" fill="#fff"/><circle cx="3.85" cy="7.00" r="0.55" fill="#fff"/><circle cx="6.30" cy="7.00" r="0.55" fill="#fff"/><circle cx="8.75" cy="7.00" r="0.55" fill="#fff"/><circle cx="11.20" cy="7.00" r="0.55" fill="#fff"/><circle cx="13.65" cy="7.00" r="0.55" fill="#fff"/><circle cx="16.10" cy="7.00" r="0.55" fill="#fff"/><circle cx="2.62" cy="8.45" r="0.55" fill="#fff"/><circle cx="5.07" cy="8.45" r="0.55" fill="#fff"/><circle cx="7.52" cy="8.45" r="0.55" fill="#fff"/><circle cx="9.97" cy="8.45" r="0.55" fill="#fff"/><circle cx="12.42" cy="8.45" r="0.55" fill="#fff"/><circle cx="14.87" cy="8.45" r="0.55" fill="#fff"/><circle cx="1.40" cy="9.90" r="0.55" fill="#fff"/><circle cx="3.85" cy="9.90" r="0.55" fill="#fff"/><circle cx="6.30" cy="9.90" r="0.55" fill="#fff"/><circle cx="8.75" cy="9.90" r="0.55" fill="#fff"/><circle cx="11.20" cy="9.90" r="0.55" fill="#fff"/><circle cx="13.65" cy="9.90" r="0.55" fill="#fff"/><circle cx="16.10" cy="9.90" r="0.55" fill="#fff"/><circle cx="2.62" cy="11.35" r="0.55" fill="#fff"/><circle cx="5.07" cy="11.35" r="0.55" fill="#fff"/><circle cx="7.52" cy="11.35" r="0.55" fill="#fff"/><circle cx="9.97" cy="11.35" r="0.55" fill="#fff"/><circle cx="12.42" cy="11.35" r="0.55" fill="#fff"/><circle cx="14.87" cy="11.35" r="0.55" fill="#fff"/><circle cx="1.40" cy="12.80" r="0.55" fill="#fff"/><circle cx="3.85" cy="12.80" r="0.55" fill="#fff"/><circle cx="6.30" cy="12.80" r="0.55" fill="#fff"/><circle cx="8.75" cy="12.80" r="0.55" fill="#fff"/><circle cx="11.20" cy="12.80" r="0.55" fill="#fff"/><circle cx="13.65" cy="12.80" r="0.55" fill="#fff"/><circle cx="16.10" cy="12.80" r="0.55" fill="#fff"/></svg></div>
<div class="t" style="left:304.5px;top:932.4px;letter-spacing:-0.236px">$BotsiAnonymousID:pai6f61dfoif4nds7c7</div>
<div class="abs" style="left:992px;top:928px;width:40px;height:40px"><svg width="40" height="40" viewBox="0 0 40 40"><defs><linearGradient id="og" x1="0" y1="0" x2="0" y2="1"><stop offset="0" stop-color="#7fe000"/><stop offset="0.45" stop-color="#a2ee00"/><stop offset="0.7" stop-color="#66cc00"/><stop offset="0.72" stop-color="#22b000"/><stop offset="1" stop-color="#00a300"/></linearGradient></defs><clipPath id="oc"><rect width="40" height="40" rx="8.5"/></clipPath><g clip-path="url(#oc)"><rect width="40" height="40" fill="url(#og)"/><path d="M0 6C5 4 9 4.5 13 6.5L20 10.5L27 6.5C31 4.5 35 4 40 6V0H0Z" fill="#74d400" opacity="0.9"/><path d="M0 26C4 30 10 30 14 27.5L20 26L26 27.5C30 30 36 30 40 26V40H0Z" fill="#16ae00" opacity="0.85"/></g><ellipse cx="8.8" cy="18.7" rx="5.6" ry="7" fill="#fff"/><ellipse cx="31.2" cy="18.7" rx="5.6" ry="7" fill="#fff"/><ellipse cx="8.9" cy="19" rx="3.3" ry="3.8" fill="#3a3a3a"/><ellipse cx="31.1" cy="19" rx="3.3" ry="3.8" fill="#3a3a3a"/><circle cx="7.9" cy="17.3" r="1" fill="#fff"/><circle cx="30.1" cy="17.3" r="1" fill="#fff"/><path d="M16 24.5C16 22.5 18 21.8 20 21.8C22 21.8 24 22.5 24 24.5C24 27 22 31.5 20 32.5C18 31.5 16 27 16 24.5Z" fill="#ffb400"/><path d="M17.5 29C18.5 31 19.2 32 20 32.5C20.8 32 21.5 31 22.5 29Z" fill="#ff8a00"/></svg></div>
<div class="t" style="left:1109px;width:230px;text-align:center;top:932.4px">App Store</div>
<div class="t" style="left:1371.2px;top:932.4px;letter-spacing:-0.967px">vvbm_1499_3d_3d0</div>
<div class="t" style="left:1882.8px;top:932.4px;letter-spacing:-0.62px">$19.99</div>
<div class="t" style="left:2123.0px;top:932.4px;letter-spacing:-0.09px">9 hours ago</div>
<div class="t" style="left:2362.8px;top:932.4px;letter-spacing:-0.375px">in a year</div>
<div class="abs" style="left:2677.5px;top:932px;width:32px;height:32px"><div class="cb on"><svg width="32" height="32" viewBox="0 0 32 32" fill="none" stroke="#fff" stroke-width="2.7" stroke-linecap="round" stroke-linejoin="round"><path d="M9.3 16.7L13.4 20.8L22.5 12.2"/></svg></div></div>
<div class="vs" style="left:916px;top:932px"></div>
<div class="vs" style="left:1108px;top:932px"></div>
<div class="vs" style="left:1338px;top:932px"></div>
<div class="vs" style="left:1850px;top:932px"></div>
<div class="vs" style="left:2091.5px;top:932px"></div>
<div class="vs" style="left:2332px;top:932px"></div>
<div class="vs" style="left:2573px;top:932px"></div>
<div class="hl" style="top:998px"></div>
<div class="abs" style="left:248px;top:1040px;width:32px;height:24px"><svg width="32" height="24" viewBox="0 0 32 24"><rect width="32" height="24" fill="#f5f7fb"/><rect width="8" height="24" fill="#e81c1c"/><rect x="24" width="8" height="24" fill="#e81c1c"/><path d="M16 6.5L17 8.5L18.2 8L17.8 11L19.5 9.5L20 10.5L22 10.2L21.2 12L22 12.6L18.5 15.3L18.8 16.3L16.3 16V20H15.7V16L13.2 16.3L13.5 15.3L10 12.6L10.8 12L10 10.2L12 10.5L12.5 9.5L14.2 11L13.8 8L15 8.5Z" fill="#e81c1c"/></svg></div>
<div class="t" style="left:304.5px;top:1036.4px;letter-spacing:-0.203px">$BotsiAnonymousID:91f1f61dpaff4cdf5k2</div>
<div class="abs" style="left:992px;top:1032px;width:40px;height:40px"><svg width="40" height="40" viewBox="0 0 40 40"><defs><linearGradient id="og" x1="0" y1="0" x2="0" y2="1"><stop offset="0" stop-color="#7fe000"/><stop offset="0.45" stop-color="#a2ee00"/><stop offset="0.7" stop-color="#66cc00"/><stop offset="0.72" stop-color="#22b000"/><stop offset="1" stop-color="#00a300"/></linearGradient></defs><clipPath id="oc"><rect width="40" height="40" rx="8.5"/></clipPath><g clip-path="url(#oc)"><rect width="40" height="40" fill="url(#og)"/><path d="M0 6C5 4 9 4.5 13 6.5L20 10.5L27 6.5C31 4.5 35 4 40 6V0H0Z" fill="#74d400" opacity="0.9"/><path d="M0 26C4 30 10 30 14 27.5L20 26L26 27.5C30 30 36 30 40 26V40H0Z" fill="#16ae00" opacity="0.85"/></g><ellipse cx="8.8" cy="18.7" rx="5.6" ry="7" fill="#fff"/><ellipse cx="31.2" cy="18.7" rx="5.6" ry="7" fill="#fff"/><ellipse cx="8.9" cy="19" rx="3.3" ry="3.8" fill="#3a3a3a"/><ellipse cx="31.1" cy="19" rx="3.3" ry="3.8" fill="#3a3a3a"/><circle cx="7.9" cy="17.3" r="1" fill="#fff"/><circle cx="30.1" cy="17.3" r="1" fill="#fff"/><path d="M16 24.5C16 22.5 18 21.8 20 21.8C22 21.8 24 22.5 24 24.5C24 27 22 31.5 20 32.5C18 31.5 16 27 16 24.5Z" fill="#ffb400"/><path d="M17.5 29C18.5 31 19.2 32 20 32.5C20.8 32 21.5 31 22.5 29Z" fill="#ff8a00"/></svg></div>
<div class="t" style="left:1109px;width:230px;text-align:center;top:1036.4px">App Store</div>
<div class="t" style="left:1371.2px;top:1036.4px;letter-spacing:-0.967px">vvbm_1499_3d_3d0</div>
<div class="t" style="left:1882.8px;top:1036.4px;letter-spacing:-0.525px">Trial</div>
<div class="t" style="left:2123.0px;top:1036.4px;letter-spacing:-0.09px">9 hours ago</div>
<div class="t" style="left:2362.8px;top:1036.4px;letter-spacing:0.0px">in 3 days</div>
<div class="abs" style="left:2677.5px;top:1036px;width:32px;height:32px"><div class="cb"></div></div>
<div class="vs" style="left:916px;top:1036px"></div>
<div class="vs" style="left:1108px;top:1036px"></div>
<div class="vs" style="left:1338px;top:1036px"></div>
<div class="vs" style="left:1850px;top:1036px"></div>
<div class="vs" style="left:2091.5px;top:1036px"></div>
<div class="vs" style="left:2332px;top:1036px"></div>
<div class="vs" style="left:2573px;top:1036px"></div>
<div class="hl" style="top:1102px"></div>
<div class="abs" style="left:248px;top:1144px;width:32px;height:24px"><svg width="32" height="24" viewBox="0 0 32 24"><rect width="32" height="8" fill="#262626"/><rect y="8" width="32" height="8" fill="#e81c1c"/><rect y="16" width="32" height="8" fill="#ffd00f"/></svg></div>
<div class="t" style="left:304.5px;top:1140.4px;letter-spacing:-0.041px">$BotsiAnonymousID:4776ff61djayq4cdf8p8</div>
<div class="abs" style="left:992px;top:1136px;width:40px;height:40px"><svg width="40" height="40" viewBox="0 0 40 40"><defs><linearGradient id="og" x1="0" y1="0" x2="0" y2="1"><stop offset="0" stop-color="#7fe000"/><stop offset="0.45" stop-color="#a2ee00"/><stop offset="0.7" stop-color="#66cc00"/><stop offset="0.72" stop-color="#22b000"/><stop offset="1" stop-color="#00a300"/></linearGradient></defs><clipPath id="oc"><rect width="40" height="40" rx="8.5"/></clipPath><g clip-path="url(#oc)"><rect width="40" height="40" fill="url(#og)"/><path d="M0 6C5 4 9 4.5 13 6.5L20 10.5L27 6.5C31 4.5 35 4 40 6V0H0Z" fill="#74d400" opacity="0.9"/><path d="M0 26C4 30 10 30 14 27.5L20 26L26 27.5C30 30 36 30 40 26V40H0Z" fill="#16ae00" opacity="0.85"/></g><ellipse cx="8.8" cy="18.7" rx="5.6" ry="7" fill="#fff"/><ellipse cx="31.2" cy="18.7" rx="5.6" ry="7" fill="#fff"/><ellipse cx="8.9" cy="19" rx="3.3" ry="3.8" fill="#3a3a3a"/><ellipse cx="31.1" cy="19" rx="3.3" ry="3.8" fill="#3a3a3a"/><circle cx="7.9" cy="17.3" r="1" fill="#fff"/><circle cx="30.1" cy="17.3" r="1" fill="#fff"/><path d="M16 24.5C16 22.5 18 21.8 20 21.8C22 21.8 24 22.5 24 24.5C24 27 22 31.5 20 32.5C18 31.5 16 27 16 24.5Z" fill="#ffb400"/><path d="M17.5 29C18.5 31 19.2 32 20 32.5C20.8 32 21.5 31 22.5 29Z" fill="#ff8a00"/></svg></div>
<div class="t" style="left:1109px;width:230px;text-align:center;top:1140.4px">App Store</div>
<div class="t" style="left:1371.2px;top:1140.4px;letter-spacing:-0.967px">vvbm_1499_3d_3d0</div>
<div class="t" style="left:1882.8px;top:1140.4px;letter-spacing:-0.525px">Trial</div>
<div class="t" style="left:2122.0px;top:1140.4px;letter-spacing:-0.564px">11 hours ago</div>
<div class="t" style="left:2362.8px;top:1140.4px;letter-spacing:0.0px">in 3 days</div>
<div class="abs" style="left:2677.5px;top:1140px;width:32px;height:32px"><div class="cb"></div></div>
<div class="vs" style="left:916px;top:1140px"></div>
<div class="vs" style="left:1108px;top:1140px"></div>
<div class="vs" style="left:1338px;top:1140px"></div>
<div class="vs" style="left:1850px;top:1140px"></div>
<div class="vs" style="left:2091.5px;top:1140px"></div>
<div class="vs" style="left:2332px;top:1140px"></div>
<div class="vs" style="left:2573px;top:1140px"></div>
<div class="hl" style="top:1206px"></div>
<div class="abs" style="left:248px;top:1248px;width:32px;height:24px"><svg width="32" height="24" viewBox="0 0 32 24"><rect width="32" height="24" fill="#f5f7fb"/><rect width="8" height="24" fill="#e81c1c"/><rect x="24" width="8" height="24" fill="#e81c1c"/><path d="M16 6.5L17 8.5L18.2 8L17.8 11L19.5 9.5L20 10.5L22 10.2L21.2 12L22 12.6L18.5 15.3L18.8 16.3L16.3 16V20H15.7V16L13.2 16.3L13.5 15.3L10 12.6L10.8 12L10 10.2L12 10.5L12.5 9.5L14.2 11L13.8 8L15 8.5Z" fill="#e81c1c"/></svg></div>
<div class="t" style="left:304.5px;top:1244.4px;letter-spacing:0.047px">$BotsiAnonymousID:64f9f61dzzdh4cdf3j0</div>
<div class="abs" style="left:992px;top:1240px;width:40px;height:40px"><svg width="40" height="40" viewBox="0 0 40 40"><defs><linearGradient id="og" x1="0" y1="0" x2="0" y2="1"><stop offset="0" stop-color="#7fe000"/><stop offset="0.45" stop-color="#a2ee00"/><stop offset="0.7" stop-color="#66cc00"/><stop offset="0.72" stop-color="#22b000"/><stop offset="1" stop-color="#00a300"/></linearGradient></defs><clipPath id="oc"><rect width="40" height="40" rx="8.5"/></clipPath><g clip-path="url(#oc)"><rect width="40" height="40" fill="url(#og)"/><path d="M0 6C5 4 9 4.5 13 6.5L20 10.5L27 6.5C31 4.5 35 4 40 6V0H0Z" fill="#74d400" opacity="0.9"/><path d="M0 26C4 30 10 30 14 27.5L20 26L26 27.5C30 30 36 30 40 26V40H0Z" fill="#16ae00" opacity="0.85"/></g><ellipse cx="8.8" cy="18.7" rx="5.6" ry="7" fill="#fff"/><ellipse cx="31.2" cy="18.7" rx="5.6" ry="7" fill="#fff"/><ellipse cx="8.9" cy="19" rx="3.3" ry="3.8" fill="#3a3a3a"/><ellipse cx="31.1" cy="19" rx="3.3" ry="3.8" fill="#3a3a3a"/><circle cx="7.9" cy="17.3" r="1" fill="#fff"/><circle cx="30.1" cy="17.3" r="1" fill="#fff"/><path d="M16 24.5C16 22.5 18 21.8 20 21.8C22 21.8 24 22.5 24 24.5C24 27 22 31.5 20 32.5C18 31.5 16 27 16 24.5Z" fill="#ffb400"/><path d="M17.5 29C18.5 31 19.2 32 20 32.5C20.8 32 21.5 31 22.5 29Z" fill="#ff8a00"/></svg></div>
<div class="t" style="left:1109px;width:230px;text-align:center;top:1244.4px">App Store</div>
<div class="t" style="left:1371.2px;top:1244.4px;letter-spacing:-0.967px">vvbm_1499_3d_3d0</div>
<div class="t" style="left:1882.8px;top:1244.4px;letter-spacing:-0.525px">Trial</div>
<div class="t" style="left:2122.0px;top:1244.4px;letter-spacing:-0.427px">13 hours ago</div>
<div class="t" style="left:2362.8px;top:1244.4px;letter-spacing:-0.125px">in 2 days</div>
<div class="abs" style="left:2677.5px;top:1244px;width:32px;height:32px"><div class="cb"></div></div>
<div class="vs" style="left:916px;top:1244px"></div>
<div class="vs" style="left:1108px;top:1244px"></div>
<div class="vs" style="left:1338px;top:1244px"></div>
<div class="vs" style="left:1850px;top:1244px"></div>
<div class="vs" style="left:2091.5px;top:1244px"></div>
<div class="vs" style="left:2332px;top:1244px"></div>
<div class="vs" style="left:2573px;top:1244px"></div>
<div class="hl" style="top:1310px"></div>
<div class="abs" style="left:248px;top:1352px;width:32px;height:24px"><svg width="32" height="24" viewBox="0 0 32 24"><rect width="32" height="24" fill="#fff"/><rect y="0.000" width="32" height="1.846" fill="#e8141c"/><rect y="3.692" width="32" height="1.846" fill="#e8141c"/><rect y="7.385" width="32" height="1.846" fill="#e8141c"/><rect y="11.077" width="32" height="1.846" fill="#e8141c"/><rect y="14.769" width="32" height="1.846" fill="#e8141c"/><rect y="18.462" width="32" height="1.846" fill="#e8141c"/><rect y="22.154" width="32" height="1.846" fill="#e8141c"/><rect width="17.5" height="12.9" fill="#3b4aa6"/><circle cx="1.40" cy="1.20" r="0.55" fill="#fff"/><circle cx="3.85" cy="1.20" r="0.55" fill="#fff"/><circle cx="6.30" cy="1.20" r="0.55" fill="#fff"/><circle cx="8.75" cy="1.20" r="0.55" fill="#fff"/><circle cx="11.20" cy="1.20" r="0.55" fill="#fff"/><circle cx="13.65" cy="1.20" r="0.55" fill="#fff"/><circle cx="16.10" cy="1.20" r="0.55" fill="#fff"/><circle cx="2.62" cy="2.65" r="0.55" fill="#fff"/><circle cx="5.07" cy="2.65" r="0.55" fill="#fff"/><circle cx="7.52" cy="2.65" r="0.55" fill="#fff"/><circle cx="9.97" cy="2.65" r="0.55" fill="#fff"/><circle cx="12.42" cy="2.65" r="0.55" fill="#fff"/><circle cx="14.87" cy="2.65" r="0.55" fill="#fff"/><circle cx="1.40" cy="4.10" r="0.55" fill="#fff"/><circle cx="3.85" cy="4.10" r="0.55" fill="#fff"/><circle cx="6.30" cy="4.10" r="0.55" fill="#fff"/><circle cx="8.75" cy="4.10" r="0.55" fill="#fff"/><circle cx="11.20" cy="4.10" r="0.55" fill="#fff"/><circle cx="13.65" cy="4.10" r="0.55" fill="#fff"/><circle cx="16.10" cy="4.10" r="0.55" fill="#fff"/><circle cx="2.62" cy="5.55" r="0.55" fill="#fff"/><circle cx="5.07" cy="5.55" r="0.55" fill="#fff"/><circle cx="7.52" cy="5.55" r="0.55" fill="#fff"/><circle cx="9.97" cy="5.55" r="0.55" fill="#fff"/><circle cx="12.42" cy="5.55" r="0.55" fill="#fff"/><circle cx="14.87" cy="5.55" r="0.55" fill="#fff"/><circle cx="1.40" cy="7.00" r="0.55" fill="#fff"/><circle cx="3.85" cy="7.00" r="0.55" fill="#fff"/><circle cx="6.30" cy="7.00" r="0.55" fill="#fff"/><circle cx="8.75" cy="7.00" r="0.55" fill="#fff"/><circle cx="11.20" cy="7.00" r="0.55" fill="#fff"/><circle cx="13.65" cy="7.00" r="0.55" fill="#fff"/><circle cx="16.10" cy="7.00" r="0.55" fill="#fff"/><circle cx="2.62" cy="8.45" r="0.55" fill="#fff"/><circle cx="5.07" cy="8.45" r="0.55" fill="#fff"/><circle cx="7.52" cy="8.45" r="0.55" fill="#fff"/><circle cx="9.97" cy="8.45" r="0.55" fill="#fff"/><circle cx="12.42" cy="8.45" r="0.55" fill="#fff"/><circle cx="14.87" cy="8.45" r="0.55" fill="#fff"/><circle cx="1.40" cy="9.90" r="0.55" fill="#fff"/><circle cx="3.85" cy="9.90" r="0.55" fill="#fff"/><circle cx="6.30" cy="9.90" r="0.55" fill="#fff"/><circle cx="8.75" cy="9.90" r="0.55" fill="#fff"/><circle cx="11.20" cy="9.90" r="0.55" fill="#fff"/><circle cx="13.65" cy="9.90" r="0.55" fill="#fff"/><circle cx="16.10" cy="9.90" r="0.55" fill="#fff"/><circle cx="2.62" cy="11.35" r="0.55" fill="#fff"/><circle cx="5.07" cy="11.35" r="0.55" fill="#fff"/><circle cx="7.52" cy="11.35" r="0.55" fill="#fff"/><circle cx="9.97" cy="11.35" r="0.55" fill="#fff"/><circle cx="12.42" cy="11.35" r="0.55" fill="#fff"/><circle cx="14.87" cy="11.35" r="0.55" fill="#fff"/><circle cx="1.40" cy="12.80" r="0.55" fill="#fff"/><circle cx="3.85" cy="12.80" r="0.55" fill="#fff"/><circle cx="6.30" cy="12.80" r="0.55" fill="#fff"/><circle cx="8.75" cy="12.80" r="0.55" fill="#fff"/><circle cx="11.20" cy="12.80" r="0.55" fill="#fff"/><circle cx="13.65" cy="12.80" r="0.55" fill="#fff"/><circle cx="16.10" cy="12.80" r="0.55" fill="#fff"/></svg></div>
<div class="t" style="left:304.5px;top:1348.4px;letter-spacing:0.0px">$BotsiAnonymousID:93f6f61dmauq4cdfh4u</div>
<div class="abs" style="left:992px;top:1344px;width:40px;height:40px"><svg width="40" height="40" viewBox="0 0 40 40"><defs><linearGradient id="og" x1="0" y1="0" x2="0" y2="1"><stop offset="0" stop-color="#7fe000"/><stop offset="0.45" stop-color="#a2ee00"/><stop offset="0.7" stop-color="#66cc00"/><stop offset="0.72" stop-color="#22b000"/><stop offset="1" stop-color="#00a300"/></linearGradient></defs><clipPath id="oc"><rect width="40" height="40" rx="8.5"/></clipPath><g clip-path="url(#oc)"><rect width="40" height="40" fill="url(#og)"/><path d="M0 6C5 4 9 4.5 13 6.5L20 10.5L27 6.5C31 4.5 35 4 40 6V0H0Z" fill="#74d400" opacity="0.9"/><path d="M0 26C4 30 10 30 14 27.5L20 26L26 27.5C30 30 36 30 40 26V40H0Z" fill="#16ae00" opacity="0.85"/></g><ellipse cx="8.8" cy="18.7" rx="5.6" ry="7" fill="#fff"/><ellipse cx="31.2" cy="18.7" rx="5.6" ry="7" fill="#fff"/><ellipse cx="8.9" cy="19" rx="3.3" ry="3.8" fill="#3a3a3a"/><ellipse cx="31.1" cy="19" rx="3.3" ry="3.8" fill="#3a3a3a"/><circle cx="7.9" cy="17.3" r="1" fill="#fff"/><circle cx="30.1" cy="17.3" r="1" fill="#fff"/><path d="M16 24.5C16 22.5 18 21.8 20 21.8C22 21.8 24 22.5 24 24.5C24 27 22 31.5 20 32.5C18 31.5 16 27 16 24.5Z" fill="#ffb400"/><path d="M17.5 29C18.5 31 19.2 32 20 32.5C20.8 32 21.5 31 22.5 29Z" fill="#ff8a00"/></svg></div>
<div class="t" style="left:1109px;width:230px;text-align:center;top:1348.4px">App Store</div>
<div class="t" style="left:1371.2px;top:1348.4px;letter-spacing:-0.967px">vvbm_1499_3d_3d0</div>
<div class="t" style="left:1882.8px;top:1348.4px;letter-spacing:-0.525px">Trial</div>
<div class="t" style="left:2122.0px;top:1348.4px;letter-spacing:-0.482px">18 hours ago</div>
<div class="t" style="left:2362.8px;top:1348.4px;letter-spacing:-0.125px">in 2 days</div>
<div class="abs" style="left:2677.5px;top:1348px;width:32px;height:32px"><div class="cb"></div></div>
<div class="vs" style="left:916px;top:1348px"></div>
<div class="vs" style="left:1108px;top:1348px"></div>
<div class="vs" style="left:1338px;top:1348px"></div>
<div class="vs" style="left:1850px;top:1348px"></div>
<div class="vs" style="left:2091.5px;top:1348px"></div>
<div class="vs" style="left:2332px;top:1348px"></div>
<div class="vs" style="left:2573px;top:1348px"></div>
<div class="hl" style="top:1414px"></div>
<div class="t" style="left:216px;top:1472px;letter-spacing:-0.35px">1 - 40 of 41</div>
<div class="pg" style="left:2574px"><svg width="48" height="48" viewBox="0 0 48 48" fill="none" stroke="#fff" stroke-width="3" stroke-linecap="round" stroke-linejoin="round"><path d="M27.7 17L20.4 24L27.7 31.1"/></svg></div>
<div class="pg on" style="left:2638px">1</div>
<div class="pg" style="left:2702px">2</div>
<div class="pg" style="left:2766px"><svg width="48" height="48" viewBox="0 0 48 48" fill="none" stroke="#fff" stroke-width="3" stroke-linecap="round" stroke-linejoin="round"><path d="M20.3 17L27.6 24L20.3 31.1"/></svg></div>
</body></html>
